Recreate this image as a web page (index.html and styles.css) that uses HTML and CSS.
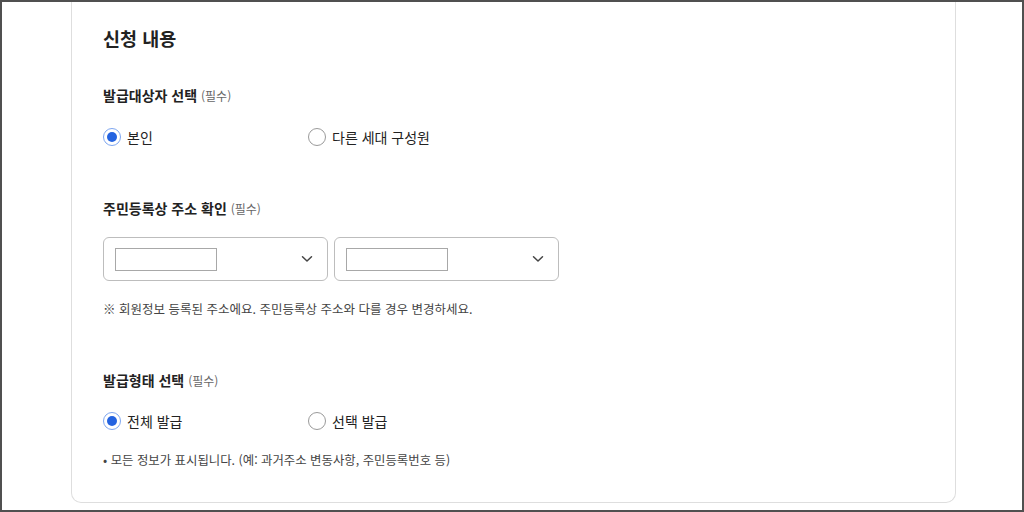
FILE: index.html
```html
<!DOCTYPE html>
<html lang="ko">
<head>
<meta charset="utf-8">
<title>신청 내용</title>
<link rel="stylesheet" href="styles.css">
</head>
<body>
<div class="frame">
  <div class="card">
    <h2 class="title">신청 내용</h2>

    <div class="label">발급대상자 선택 <span class="req">(필수)</span></div>
    <div class="radios">
      <label class="opt"><span class="radio checked"></span><span class="opt-text">본인</span></label>
      <label class="opt"><span class="radio"></span><span class="opt-text">다른 세대 구성원</span></label>
    </div>

    <div class="label label-gap">주민등록상 주소 확인 <span class="req">(필수)</span></div>
    <div class="selects">
      <div class="select">
        <span class="inner"></span>
        <svg class="chev" width="12" height="8" viewBox="0 0 12 8"><path d="M1.5 1.8 L6 6 L10.5 1.8" fill="none" stroke="#444" stroke-width="1.5" stroke-linecap="round" stroke-linejoin="round"/></svg>
      </div>
      <div class="select">
        <span class="inner"></span>
        <svg class="chev" width="12" height="8" viewBox="0 0 12 8"><path d="M1.5 1.8 L6 6 L10.5 1.8" fill="none" stroke="#444" stroke-width="1.5" stroke-linecap="round" stroke-linejoin="round"/></svg>
      </div>
    </div>
    <p class="note">※ 회원정보 등록된 주소에요. 주민등록상 주소와 다를 경우 변경하세요.</p>

    <div class="label label-gap2">발급형태 선택 <span class="req">(필수)</span></div>
    <div class="radios radios-2">
      <label class="opt"><span class="radio checked"></span><span class="opt-text">전체 발급</span></label>
      <label class="opt"><span class="radio"></span><span class="opt-text">선택 발급</span></label>
    </div>
    <p class="bullet">• 모든 정보가 표시됩니다. (예: 과거주소 변동사항, 주민등록번호 등)</p>
  </div>
</div>
</body>
</html>
```

FILE: styles.css
```css
* { box-sizing: border-box; }
html, body { margin: 0; padding: 0; background: #fff; }
body {
  font-family: "Noto Sans CJK KR", "Noto Sans", sans-serif;
  color: #222;
}
.frame {
  width: 1024px;
  height: 512px;
  border: 2px solid #505050;
  overflow: hidden;
  background: #fff;
}
.card {
  margin-left: 69px;
  width: 885px;
  border: 1px solid #dedede;
  border-top: none;
  border-radius: 0 0 10px 10px;
  padding: 22px 31px 33px;
}
.title {
  margin: 0;
  font-size: 18.5px;
  line-height: 28px;
  font-weight: 700;
  color: #222;
}
.label {
  margin-top: 33px;
  font-size: 14px;
  line-height: 20px;
  font-weight: 700;
  color: #222;
}
.label-gap { margin-top: 49px; }
.label-gap2 { margin-top: 52px; }
.req {
  font-size: 12px;
  font-weight: 400;
  color: #666;
}
.radios {
  display: flex;
  margin-top: 19px;
  height: 24px;
}
.radios-2 { margin-top: 18px; }
.opt {
  display: flex;
  align-items: center;
  width: 205px;
  gap: 6px;
}
.radio {
  width: 18px;
  height: 18px;
  border-radius: 50%;
  border: 1px solid #9a9a9a;
  background: #fff;
  flex: none;
  display: flex;
  align-items: center;
  justify-content: center;
}
.radio.checked { border-color: #7ea6f0; }
.radio.checked::after {
  content: "";
  width: 10px;
  height: 10px;
  border-radius: 50%;
  background: #2463e0;
}
.opt-text {
  font-size: 14px;
  line-height: 24px;
  color: #222;
}
.selects {
  display: flex;
  gap: 6px;
  margin-top: 18px;
}
.select {
  width: 225px;
  height: 44px;
  border: 1px solid #bdbdbd;
  border-radius: 6px;
  display: flex;
  align-items: center;
  justify-content: space-between;
  padding: 0 14px 0 11px;
}
.inner {
  width: 102px;
  height: 23px;
  border: 1px solid #a8a8a8;
  background: #fff;
}
.chev { display: block; }
.note {
  margin: 19px 0 0;
  font-size: 12.5px;
  line-height: 18px;
  color: #444;
}
.bullet {
  margin: 18px 0 0;
  font-size: 12.4px;
  line-height: 18px;
  color: #444;
}
```
